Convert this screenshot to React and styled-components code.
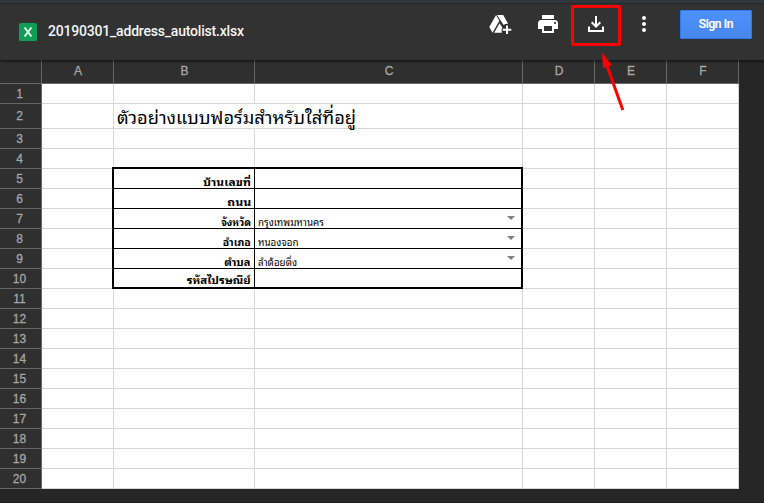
import React from "react";
import styled, { createGlobalStyle, css } from "styled-components";

const GlobalStyle = createGlobalStyle`
  * { box-sizing: border-box; }
  body { margin: 0; overflow: hidden; background: #262626; }
`;

const Viewer = styled.div`
  width: 764px;
  height: 503px;
  overflow: hidden;
  background: #262626;
  border-bottom: 1px solid #1b1b1b;
  font-family: "Liberation Sans", Arial, sans-serif;
`;

const TopBar = styled.header`
  position: relative;
  z-index: 5;
  display: flex;
  align-items: flex-start;
  height: 60px;
  padding: 7px 12px 0 19px;
  background: #323232;
  border-top: 3px solid #30363b;
  box-shadow: inset 0 1px 0 #292929, 0 1px 3px rgba(0, 0, 0, 0.75);
`;

const FileIcon = styled.svg`
  width: 18px;
  height: 18px;
  margin-top: 13px;
`;

const FileName = styled.h1`
  flex: 1;
  margin: 11px 0 0 11px;
  font: 500 14px/20px Roboto, sans-serif;
  letter-spacing: -0.2px;
  color: #f4f4f4;
`;

const Actions = styled.nav`
  display: flex;
  align-items: flex-start;
`;

const IconButton = styled.button`
  display: grid;
  place-items: center;
  width: 48px;
  height: 28px;
  padding: 0;
  border: 0;
  color: #fff;
  background: none;
  svg { display: block; }
`;

const SignIn = styled.button`
  width: 72px;
  height: 29px;
  margin-left: 12px;
  padding: 0;
  border: 1px solid #3079ed;
  border-radius: 1px;
  background: linear-gradient(#4d90fe, #4787ed);
  color: #fff;
  font: 500 12px/27px Roboto, sans-serif;
  letter-spacing: -0.35px;
  -webkit-text-stroke: 0.2px #fff;
`;

const Sheet = styled.main`
  display: grid;
  grid-template-columns: 42px 72px 141px 268px 72px 72px 72px;
  grid-template-rows: 24px 20px 25px repeat(18, 20px);
  width: 739px;
`;

const Heading = styled.div`
  display: flex;
  align-items: center;
  justify-content: center;
  padding: ${(p) => (p.$row ? "0 2px 0 0" : "0 0 2px 1px")};
  background: #2f2f2f;
  border: solid #676767;
  border-width: 0 1px 1px 0;
  color: #a6a6a6;
  font-size: 12px;
  line-height: 14px;
  -webkit-text-stroke: 0.3px #a6a6a6;
`;

const Cell = styled.div`
  min-width: 0;
  background: #fff;
  border: solid #d6d6d6;
  border-width: 0 1px 1px 0;
  ${(p) => p.$spill && css`border-right-color: #fff;`}
  ${(p) => p.$form && css`
    position: relative;
    z-index: 1;
    display: flex;
    align-items: flex-end;
    justify-content: ${p.$form === "label" ? "flex-end" : "space-between"};
    padding: 0 3px ${p.$last ? 2 : 0}px;
    border-color: #000;
    box-shadow: ${[
      p.$form === "label" && "-1px 0 0 #000, -2px 0 0 #000",
      p.$form === "value" && "inset -1px 0 0 #000",
      p.$first && (p.$form === "label" ? "-2px -2px 0 #000, 0 -2px 0 #000" : "0 -2px 0 #000"),
      p.$last && "inset 0 -1px 0 #000",
    ].filter(Boolean).join(", ")};
  `}
`;

const Title = styled.div`
  position: relative;
  z-index: 1;
  width: max-content;
  height: 24px;
  padding-left: 3px;
  font-family: "Noto Sans Thai Looped", Loma, Garuda, Waree, "Noto Serif Thai", sans-serif;
  font-size: 18.25px;
  line-height: 24px;
  white-space: nowrap;
  color: #000;
`;

const CellText = styled.span`
  font-family: "Noto Sans Thai Looped", Loma, Garuda, Waree, "Noto Serif Thai", sans-serif;
  font-size: 10px;
  line-height: 13px;
  font-weight: ${(p) => (p.$bold ? 700 : 400)};
  white-space: nowrap;
  color: #000;
  transform: scaleX(${(p) => p.$stretch || 1});
  transform-origin: ${(p) => (p.$bold ? "right" : "left")};
`;

const Caret = styled.i`
  align-self: center;
  margin: 0 4px 1px 0;
  border: solid transparent;
  border-width: 4px 4px 0;
  border-top-color: #808080;
`;

const Annotation = styled.svg`
  position: absolute;
  z-index: 10;
  left: 568px;
  top: 2px;
  pointer-events: none;
`;

const COLUMNS = ["A", "B", "C", "D", "E", "F"];
const FORM = {
  5: { label: "บ้านเลขที่", stretch: 1.2 },
  6: { label: "ถนน", stretch: 1.24 },
  7: { label: "จังหวัด", stretch: 1, value: "กรุงเทพมหานคร" },
  8: { label: "อำเภอ", stretch: 1.05, value: "หนองจอก" },
  9: { label: "ตำบล", stretch: 1.12, value: "ลำต้อยติ่ง" },
  10: { label: "รหัสไปรษณีย์", stretch: 1.15 },
};

function SheetCell({ column, row }) {
  const entry = FORM[row];
  if (row === 2 && column === "B") {
    return <Cell $spill><Title>ตัวอย่างแบบฟอร์มสำหรับใส่ที่อยู่</Title></Cell>;
  }
  if (entry && column === "B") {
    return (
      <Cell $form="label" $first={row === 5} $last={row === 10}>
        <CellText $bold $stretch={entry.stretch}>{entry.label}</CellText>
      </Cell>
    );
  }
  if (entry && column === "C") {
    return (
      <Cell $form="value" $first={row === 5} $last={row === 10}>
        {entry.value && <><CellText $stretch={0.98}>{entry.value}</CellText><Caret /></>}
      </Cell>
    );
  }
  return <Cell />;
}

export default function App() {
  return (
    <Viewer>
      <GlobalStyle />
      <TopBar>
        <FileIcon viewBox="0 0 18 18">
          <rect width="18" height="18" rx="1.5" fill="#109d58" />
          <path d="M5.6 4.5 12.4 13.5M12.4 4.5 5.6 13.5" stroke="#e9fff3" strokeWidth="1.9" />
        </FileIcon>
        <FileName>20190301_address_autolist.xlsx</FileName>
        <Actions>
          <IconButton aria-label="Add to My Drive">
            <svg width="24" height="24" viewBox="0 0 24 24" fill="currentColor">
              <path d="M8.1 3 1.3 15l3.2 5.7L11.3 8.8zM9.1 3h6.1l4.9 8.7a6 6 0 0 0-4.5 1.4zM11.6 11.3 6.2 20.7h7.7a6 6 0 0 1 .4-5.1z" />
              <path d="M18 13.5h2v3.2h3.3v2H20V22h-2v-3.3h-3.3v-2H18z" />
            </svg>
          </IconButton>
          <IconButton aria-label="Print">
            <svg width="24" height="24" viewBox="0 0 24 24" fill="currentColor">
              <path d="M19 8H5c-1.66 0-3 1.34-3 3v6h4v4h12v-4h4v-6c0-1.66-1.34-3-3-3zm-3 11H8v-5h8v5zm3-7c-.55 0-1-.45-1-1s.45-1 1-1 1 .45 1 1-.45 1-1 1zm-1-9H6v4h12V3z" />
            </svg>
          </IconButton>
          <IconButton aria-label="Download">
            <svg width="24" height="24" viewBox="0 0 24 24" fill="none" stroke="currentColor" strokeWidth="2">
              <path d="M5 14.5V19h14v-4.5M12 4v10M7.7 10.3 12 14.6l4.3-4.3" />
            </svg>
          </IconButton>
          <IconButton aria-label="More actions">
            <svg width="24" height="24" viewBox="0 0 24 24" fill="currentColor">
              <circle cx="12" cy="6" r="2" /><circle cx="12" cy="12" r="2" /><circle cx="12" cy="18" r="2" />
            </svg>
          </IconButton>
          <SignIn>Sign In</SignIn>
        </Actions>
      </TopBar>
      <Sheet>
        <Heading />
        {COLUMNS.map((c) => <Heading key={c}>{c}</Heading>)}
        {Array.from({ length: 20 }, (_, i) => i + 1).map((row) => (
          <React.Fragment key={row}>
            <Heading $row>{row}</Heading>
            {COLUMNS.map((c) => <SheetCell key={c} column={c} row={row} />)}
          </React.Fragment>
        ))}
      </Sheet>
      <Annotation width="60" height="112" viewBox="568 2 60 112">
        <rect x="572.5" y="6.5" width="47" height="38" rx="0.5" fill="none" stroke="#fe0000" strokeWidth="3" />
        <path d="M606 63 622.8 110" stroke="#fe0000" strokeWidth="3" />
        <path d="M602 52.5 612 65 603 68z" fill="#fe0000" />
      </Annotation>
    </Viewer>
  );
}
